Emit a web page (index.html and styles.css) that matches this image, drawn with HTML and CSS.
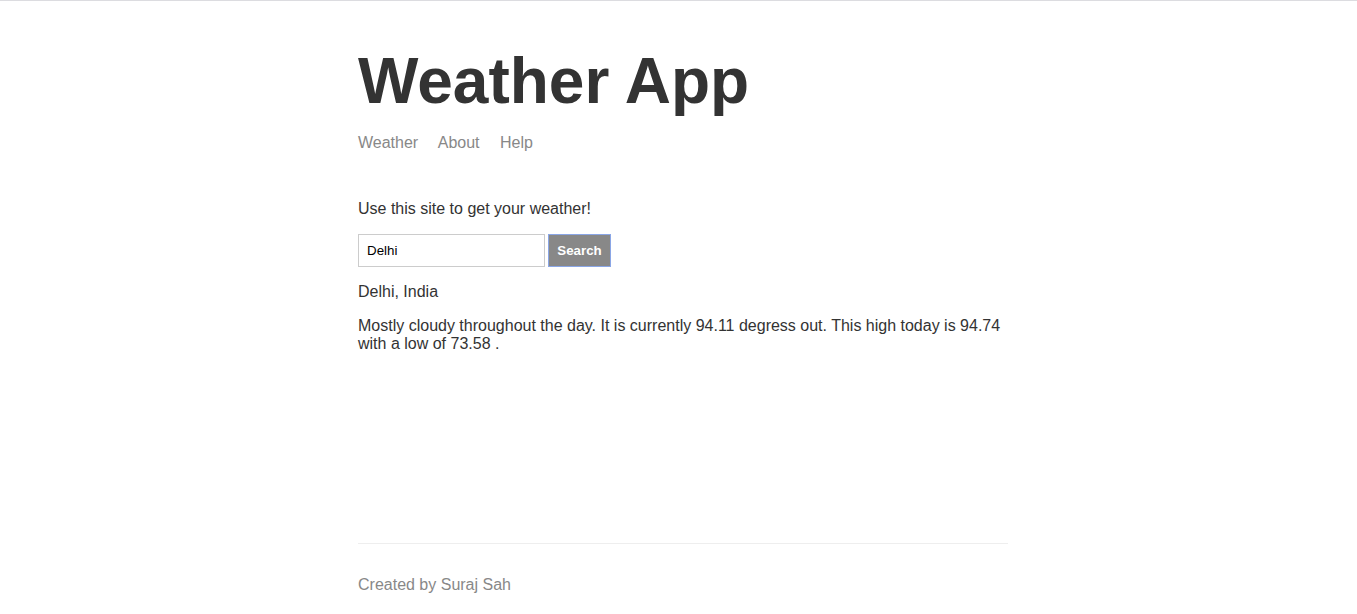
FILE: index.html
```html
<!DOCTYPE html>
<html lang="en">
<head>
<meta charset="utf-8">
<title>Weather</title>
<link rel="stylesheet" href="styles.css">
</head>
<body>
<div class="page">
  <div class="main-content">
    <header class="header">
      <h1 class="title">Weather App</h1>
      <nav class="nav">
        <a class="nav-link" href="#">Weather</a>
        <a class="nav-link" href="#">About</a>
        <a class="nav-link" href="#">Help</a>
      </nav>
    </header>
    <p class="text">Use this site to get your weather!</p>
    <form class="search-form">
      <input class="search-input" type="text" value="Delhi" placeholder="Location">
      <button class="search-button" type="button">Search</button>
    </form>
    <p class="text location">Delhi, India</p>
    <p class="text forecast">Mostly cloudy throughout the day. It is currently 94.11 degress out. This high today is 94.74 with a low of 73.58 .</p>
  </div>
  <footer class="footer">
    <p class="footer-text">Created by Suraj Sah</p>
  </footer>
</div>
</body>
</html>
```

FILE: styles.css
```css
html, body {
  margin: 0;
  padding: 0;
}

body {
  border-top: 1px solid #dcdce0;
  padding-left: 9px;
  color: #333333;
  font-family: "Liberation Sans", Arial, sans-serif;
  font-size: 16px;
  background: #ffffff;
}

.page {
  width: 650px;
  margin: 0 auto;
  min-height: calc(100vh - 1px);
  display: flex;
  flex-direction: column;
}

.main-content {
  flex-grow: 1;
}

.header {
  margin-bottom: 48px;
}

.title {
  margin: 43px 0 16px;
  font-size: 64px;
  font-weight: bold;
  line-height: normal;
}

.nav-link {
  color: #888888;
  margin-right: 16px;
  text-decoration: none;
}

.text {
  margin: 16px 0;
  line-height: normal;
}

.search-form {
  margin: 0;
  font-size: 0;
  display: flex;
  gap: 3px;
}

.search-input {
  box-sizing: border-box;
  width: 187px;
  height: 33px;
  border: 1px solid #cccccc;
  padding: 8px;
  font-family: "Liberation Sans", Arial, sans-serif;
  font-size: 13.333px;
  color: #000000;
  background: #ffffff;
  margin: 0;
}

.search-button {
  box-sizing: border-box;
  height: 33px;
  width: 63px;
  border: 1px solid #8aa6e6;
  background: #888888;
  color: #ffffff;
  padding: 0;
  font-family: "Liberation Sans", Arial, sans-serif;
  font-size: 13.333px;
  font-weight: bold;
  margin: 0;
}

.location {
  margin-top: 16px;
}

.footer {
  border-top: 1px solid #eeeeee;
  margin-top: 16px;
  padding: 32px 0 20px;
  color: #888888;
}

.footer-text {
  margin: 0;
  line-height: 18px;
}
```
